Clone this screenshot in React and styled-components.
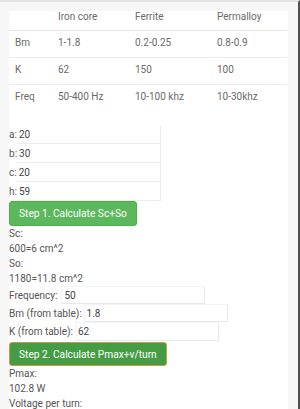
import React from "react";
import styled, { createGlobalStyle } from "styled-components";

const GlobalStyle = createGlobalStyle`
  html, body {
    margin: 0;
    padding: 0;
    background: #f7f7f7;
  }
  body {
    font-family: Roboto, "Liberation Sans", sans-serif;
  }
`;

const Frame = styled.div`
  box-sizing: border-box;
  height: 409px;
  width: 300px;
  border-top: 2px solid #e3e3e3;
  border-right: 2px solid #505050;
  padding: 9px 0 0 9px;
  overflow: hidden;
`;

const Sheet = styled.div`
  width: 279px;
  min-height: 420px;
  background: #fff;
`;

const Table = styled.table`
  width: 278px;
  border-collapse: collapse;
  table-layout: fixed;
  font-size: 10px;
  color: #6a6a6a;
  margin-bottom: 14px;
`;

const Th = styled.th`
  box-sizing: border-box;
  font-weight: normal;
  text-align: left;
  padding: 0 6px 7px;
  line-height: 12px;
  border-bottom: 1px solid #e6e6e6;
  width: ${(p) => p.$w}px;
`;

const Td = styled.td`
  padding: 6px 6px 8px;
  line-height: 12px;
  white-space: nowrap;
  border-bottom: ${(p) => (p.$last ? "none" : "1px solid #ececec")};
`;

const DimRow = styled.div`
  display: flex;
  align-items: center;
  height: 19px;
  font-size: 10px;
  color: #555;
`;

const DimInput = styled.input`
  box-sizing: border-box;
  width: 144px;
  height: 19px;
  border: none;
  border-right: 1px solid #ececec;
  border-bottom: 1px solid #ececec;
  padding: 0 2px;
  font-family: Roboto, "Liberation Sans", sans-serif;
  font-size: 10px;
  color: #444;
  background: transparent;
  outline: none;
`;

const Button = styled.button`
  display: block;
  box-sizing: border-box;
  height: ${(p) => (p.$focused ? 24 : 25)}px;
  margin-top: ${(p) => (p.$focused ? 1 : 0)}px;
  padding: 0 9px;
  background: ${(p) => (p.$focused ? "#449d44" : "#5cb85c")};
  border: 1px solid ${(p) => (p.$focused ? "#c99b45" : "#4cae4c")};
  border-radius: 3px;
  color: #fff;
  font-family: Roboto, "Liberation Sans", sans-serif;
  font-size: 10.2px;
  white-space: nowrap;
`;

const Line = styled.div`
  font-size: 10px;
  line-height: 15px;
  color: #555;
`;

const FieldRow = styled.div`
  display: flex;
  align-items: center;
  height: ${(p) => p.$h}px;
  font-size: 10px;
  color: #555;
`;

const FieldInput = styled.input`
  box-sizing: border-box;
  width: 144px;
  height: ${(p) => p.$h}px;
  margin-left: ${(p) => p.$gap}px;
  border: 1px solid #f4f4f4;
  border-right-color: #e8e8e8;
  border-bottom-color: #e8e8e8;
  padding: 0 2px;
  font-family: Roboto, "Liberation Sans", sans-serif;
  font-size: 10px;
  color: #444;
  background: #fff;
  outline: none;
`;

const rows = [
  ["Bm", "1-1.8", "0.2-0.25", "0.8-0.9"],
  ["K", "62", "150", "100"],
  ["Freq", "50-400 Hz", "10-100 khz", "10-30khz"],
];

const dims = [
  ["a", "20"],
  ["b", "30"],
  ["c", "20"],
  ["h", "59"],
];

export default function App() {
  return (
    <>
      <GlobalStyle />
      <Frame>
        <Sheet>
          <Table>
            <thead>
              <tr>
                <Th $w={43}></Th>
                <Th $w={77}>Iron core</Th>
                <Th $w={82}>Ferrite</Th>
                <Th $w={76}>Permalloy</Th>
              </tr>
            </thead>
            <tbody>
              {rows.map((r, i) => (
                <tr key={r[0]}>
                  {r.map((c, j) => (
                    <Td key={j} $last={i === rows.length - 1}>
                      {c}
                    </Td>
                  ))}
                </tr>
              ))}
            </tbody>
          </Table>

          {dims.map(([k, v]) => (
            <DimRow key={k}>
              {k}:
              <DimInput defaultValue={v} />
            </DimRow>
          ))}
          <Button>Step 1. Calculate Sc+So</Button>

          <Line>Sc:</Line>
          <Line>600=6 cm^2</Line>
          <Line>So:</Line>
          <Line>1180=11.8 cm^2</Line>

          <FieldRow $h={18}>
            Frequency:
            <FieldInput $h={18} $gap={4} defaultValue="50" />
          </FieldRow>
          <FieldRow $h={18}>
            Bm (from table):
            <FieldInput $h={18} $gap={2} defaultValue="1.8" />
          </FieldRow>
          <FieldRow $h={19}>
            K (from table):
            <FieldInput $h={19} $gap={2} defaultValue="62" />
          </FieldRow>
          <Button $focused>Step 2. Calculate Pmax+v/turn</Button>

          <Line>Pmax:</Line>
          <Line>102.8 W</Line>
          <Line>Voltage per turn:</Line>
        </Sheet>
      </Frame>
    </>
  );
}
